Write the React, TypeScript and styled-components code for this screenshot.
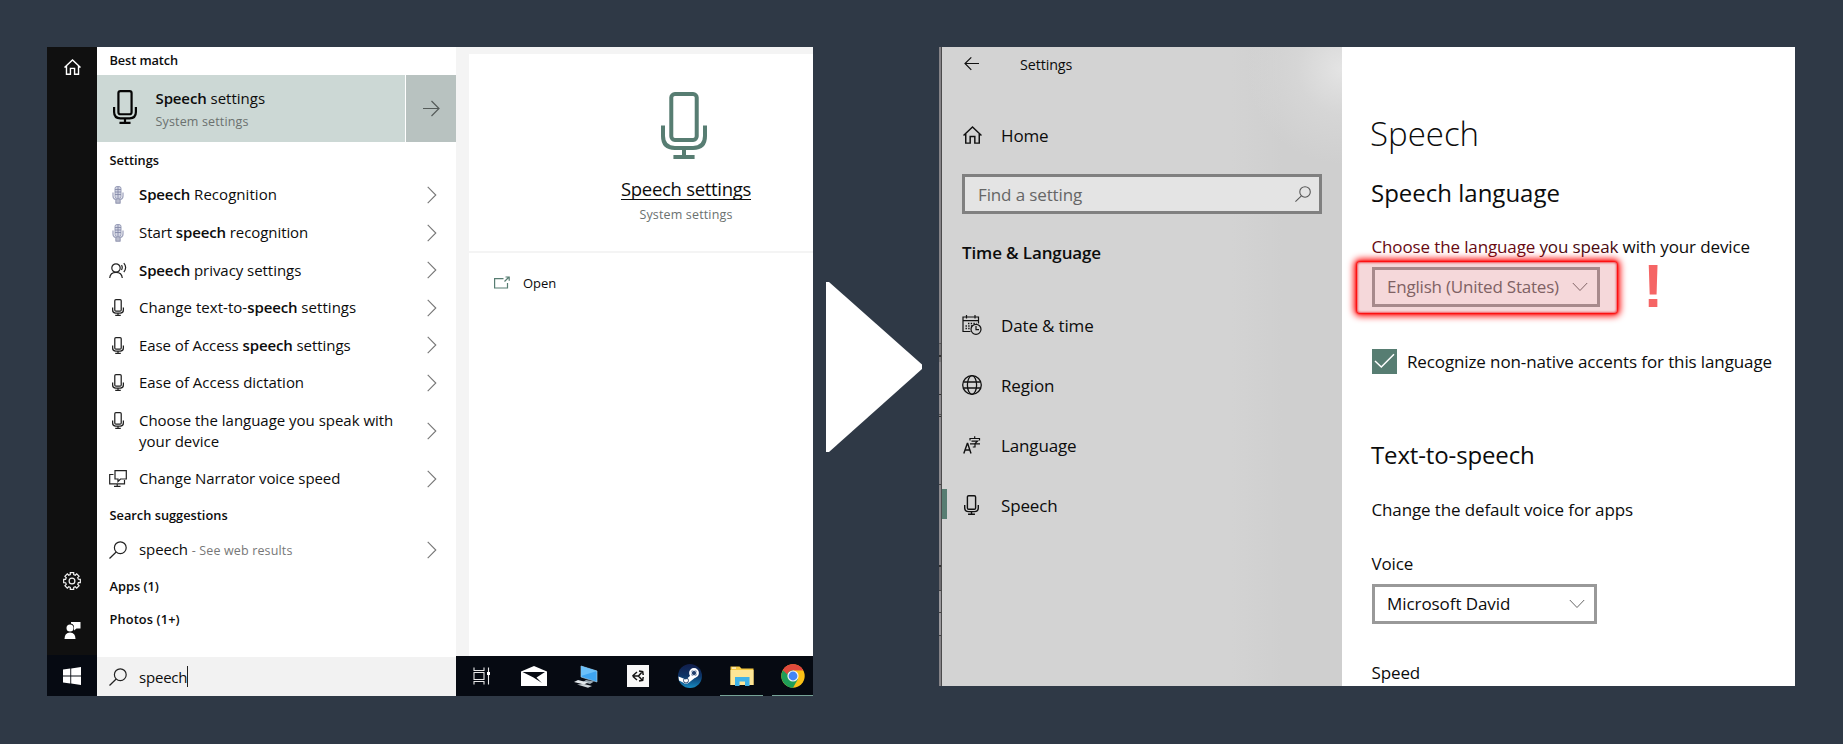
import React from 'react';
import styled, { createGlobalStyle, css } from 'styled-components';

const GlobalStyle = createGlobalStyle`
  * { box-sizing: border-box; }
  body { margin: 0; background: #2f3946; font-family: "Open Sans", "Noto Sans", sans-serif; color: #0c0c0c; }
  svg { display: block; flex: none; }
`;

const Page = styled.main`
  display: flex;
  align-items: flex-start;
  width: 1843px;
  height: 744px;
  padding: 47px;
  background: #2f3946;
  white-space: nowrap;
  overflow: hidden;
`;

/* ---------- Search window ---------- */

const SearchWindow = styled.section`
  display: grid;
  grid-template-columns: 50px 359px 357px;
  width: 766px;
  height: 649px;
  background: #fff;
  overflow: hidden;
`;

const Rail = styled.nav`
  display: flex;
  flex-direction: column;
  align-items: center;
  background: #101010;
`;

const RailIcon = styled.div<{ $h: number; $push?: boolean }>`
  display: flex;
  align-items: center;
  justify-content: center;
  width: 50px;
  height: ${p => p.$h}px;
  ${p => p.$push && css`margin-top: auto;`}
`;

const StartButton = styled(RailIcon)`
  background: #060a12;
`;

const Results = styled.div`
  display: flex;
  flex-direction: column;
`;

const GroupTitle = styled.h3<{ $h: number; $line?: number; $ls?: number }>`
  margin: 0;
  padding-left: 12.5px;
  height: ${p => p.$h}px;
  line-height: ${p => p.$line ?? p.$h}px;
  font-size: 12.8px;
  font-weight: 600;
  letter-spacing: ${p => p.$ls ?? 0}px;
`;

const BestMatch = styled.div`
  display: flex;
  gap: 1px;
  height: 67px;
`;

const BestMatchBody = styled.div`
  display: flex;
  width: 308px;
  padding: 15px 0 0 16px;
  background: #ccd8d5;
`;

const BestMatchText = styled.div`
  margin: -2.6px 0 0 18.5px;
`;

const BestMatchTitle = styled.div`
  font-size: 15px;
  line-height: 22px;
`;

const SmallGrey = styled.div`
  margin-top: 4px;
  font-size: 12.5px;
  line-height: 18px;
  letter-spacing: 0.15px;
  color: #6b716f;
`;

const BestMatchGo = styled.div`
  display: flex;
  align-items: center;
  justify-content: center;
  flex: 1;
  background: #b8c2c0;
`;

const ResultRow = styled.div<{ $tall?: boolean }>`
  display: flex;
  align-items: center;
  height: ${p => (p.$tall ? 58.1 : 37.6)}px;
  padding: 0 19px 0 12px;
`;

const ResultIcon = styled.div<{ $raise?: boolean }>`
  display: flex;
  justify-content: center;
  width: 18px;
  margin-right: 12px;
  ${p => p.$raise && css`margin-bottom: 21px;`}
`;

const ResultText = styled.div<{ $ls?: number }>`
  flex: 1;
  font-size: 15px;
  line-height: 21.2px;
  letter-spacing: ${p => p.$ls ?? 0}px;
`;

const Strong = styled.b`
  font-weight: 600;
  letter-spacing: -0.12px;
`;

const Hint = styled.span`
  font-size: 12.5px;
  letter-spacing: 0.14px;
  color: #777;
`;

const SearchInput = styled.div`
  display: flex;
  align-items: center;
  gap: 12px;
  height: 39px;
  margin-top: auto;
  padding-left: 12px;
  background: #f2f2f2;
`;

const Typed = styled.span`
  padding-top: 2px;
  border-right: 1px solid #222;
  font-size: 15px;
  line-height: 19px;
  letter-spacing: -0.2px;
`;

const Preview = styled.div`
  display: flex;
  flex-direction: column;
  gap: 2px;
  padding: 7px 0 0 13px;
  background: #f4f4f4;
  overflow: hidden;
`;

const PreviewCard = styled.div`
  display: flex;
  flex-direction: column;
  align-items: center;
  width: 434px;
  height: 197px;
  padding-top: 38px;
  background: #fff;
`;

const PreviewIcon = styled.div`
  margin-right: 4px;
`;

const PreviewTitle = styled.div`
  margin-top: 16.5px;
  font-size: 18.5px;
  line-height: 26px;
  letter-spacing: -0.3px;
  text-decoration: underline;
  text-decoration-thickness: 1px;
  text-decoration-skip-ink: none;
  text-underline-offset: 3px;
`;

const PreviewActions = styled.div`
  display: flex;
  flex: 1;
  align-items: flex-start;
  gap: 13px;
  padding: 20px 0 0 25px;
  background: #fff;
`;

const ActionIcon = styled.div`
  padding-top: 2.5px;
`;

const ActionLabel = styled.span`
  font-size: 13px;
  line-height: 20px;
`;

const Taskbar = styled.div`
  display: flex;
  height: 40px;
  margin: -2px 0 0 -13px;
  padding-left: 0.5px;
  background: #060a12;
`;

const TaskCell = styled.div<{ $open?: boolean }>`
  display: flex;
  flex: none;
  align-items: center;
  justify-content: center;
  width: 51.85px;
  height: 40px;
  background: ${p => (p.$open ? 'linear-gradient(#76a397, #76a397) 50% 100% / 43px 1px no-repeat' : 'none')};
`;

/* ---------- Arrow between windows ---------- */

const ArrowSlot = styled.div`
  margin: 235px 17px 0 13px;
`;

/* ---------- Settings window ---------- */

const SettingsWindow = styled.section`
  display: grid;
  grid-template-columns: 3px 400px 453px;
  width: 856px;
  height: 639px;
  background: #fff;
  overflow: hidden;
`;

const WindowEdge = styled.div`
  border-right: 1px solid #4b4b4c;
  background: linear-gradient(
    #858387 0 296px, #555 296px 297px, #777679 297px 308px, #333 308px 310px, #777679 310px 315px, #8b898d 315px 347px,
    #333 347px 348px, #8b898d 348px 367px, #555 367px 368px, #8b898d 368px 369px, #333 369px 370px, #8b898d 370px 437px, #444 437px 438px,
    #8b898d 438px 518px, #333 518px 520px, #6e6c70 520px 543px, #444 543px 544px, #9a989c 544px 565px, #444 565px 566px, #9a989c 566px 588px,
    #444 588px 589px, #858387 589px
  );
`;

const Side = styled.aside`
  display: flex;
  flex-direction: column;
  background:
    radial-gradient(circle at 400px 22px, rgba(230, 230, 230, 0.9), rgba(222, 222, 222, 0.45) 45px, rgba(215, 215, 215, 0) 95px),
    linear-gradient(90deg, #d3d3d3 0 290px, #cfcfcf 340px);
`;

const TitleBar = styled.div`
  display: flex;
  align-items: center;
  gap: 40px;
  height: 34px;
  padding-left: 22px;
  font-size: 14.3px;
  letter-spacing: -0.1px;
`;

const NavItem = styled.div<{ $h: number; $top?: number }>`
  display: flex;
  align-items: center;
  height: ${p => p.$h}px;
  margin-top: ${p => p.$top ?? 0}px;
  font-size: 17px;
  letter-spacing: -0.15px;
`;

const NavMarker = styled.i<{ $on?: boolean }>`
  width: 5px;
  height: 30px;
  margin: -2px 14px 0 0;
  background: ${p => (p.$on ? '#577d72' : 'transparent')};
`;

const NavIcon = styled.div<{ $narrow?: boolean }>`
  display: flex;
  justify-content: center;
  width: 22px;
  margin-right: 18px;
  padding-right: ${p => (p.$narrow ? 2 : 0)}px;
`;

const Find = styled.div`
  display: flex;
  align-items: center;
  justify-content: space-between;
  width: 360px;
  height: 40px;
  margin: 19px 0 0 20px;
  padding: 0 8px 0 13px;
  border: 3px solid #808080;
  background: #e4e4e4;
  font-size: 17px;
  letter-spacing: -0.13px;
  color: #666;
`;

const Section = styled.h2`
  height: 40px;
  margin: 19.4px 0 21.8px 20px;
  font-size: 17px;
  font-weight: 600;
  line-height: 40px;
  letter-spacing: -0.13px;
`;

const Content = styled.div`
  padding: 65px 0 0 30px;
`;

const H1 = styled.h1`
  margin: 0 0 0 -2px;
  font-size: 33px;
  font-weight: 300;
  line-height: 44px;
`;

const H2 = styled.h2<{ $top: number; $ls?: number }>`
  margin: ${p => p.$top}px 0 0 -1px;
  font-size: 24px;
  font-weight: 400;
  line-height: 32px;
  letter-spacing: ${p => p.$ls ?? 0}px;
`;

const Para = styled.p<{ $top: number }>`
  margin: ${p => p.$top}px 0 0 -0.5px;
  font-size: 17px;
  line-height: 24px;
  letter-spacing: -0.13px;
`;

const RedTint = styled.span<{ $deep?: boolean }>`
  color: ${p => (p.$deep ? '#4a0a10' : '#680a12')};
`;

const SelectRow = styled.div<{ $top: number }>`
  display: flex;
  height: 40px;
  margin-top: ${p => p.$top}px;
`;

const Select = styled.div<{ $w: number; $muted?: boolean; $ls: number }>`
  position: relative;
  display: flex;
  align-items: center;
  justify-content: space-between;
  width: ${p => p.$w}px;
  height: 40px;
  padding: 0 9px 0 12px;
  border: 3px solid #999;
  font-size: 17px;
  letter-spacing: ${p => p.$ls}px;
  color: ${p => (p.$muted ? '#636363' : '#0c0c0c')};
`;

const Glow = styled.div`
  position: absolute;
  left: -18px;
  top: -8px;
  width: 260px;
  height: 51px;
  border-radius: 3px;
  background: rgba(214, 96, 104, 0.245);
  box-shadow: 0 0 7px 3px #ff0000, 0 0 2px 1px #f00000, inset 0 0 2px 1px rgba(240, 20, 30, 0.65);
`;

const Bang = styled.span`
  width: 20px;
  margin-left: 43px;
  font: bold 61px/38px "Liberation Sans", Arial, sans-serif;
  text-align: center;
  color: #f56565;
`;

const CheckRow = styled.div`
  display: flex;
  align-items: center;
  gap: 10px;
  height: 25px;
  margin-top: 42px;
  font-size: 17px;
  letter-spacing: -0.12px;
`;

const CheckBox = styled.span`
  display: flex;
  align-items: center;
  justify-content: center;
  width: 25px;
  height: 25px;
  background: #577d72;
`;

/* ---------- Icons ---------- */

const Mic = ({ w, h, sw, color = '#111' }: { w: number; h: number; sw: number; color?: string }) => {
  const i = sw / 2;
  const cx = w / 2;
  const bw = w * 0.64 - sw;
  const by = h * 0.865;
  const r = w * 0.26;
  return (
    <svg width={w} height={h} viewBox={`0 0 ${w} ${h}`} fill="none" stroke={color} strokeWidth={sw}>
      <rect x={cx - bw / 2} y={i} width={bw} height={h * 0.745 - sw} rx={sw * 0.9} />
      <path d={`M${i} ${h * 0.5}V${by - i - r}Q${i} ${by - i} ${i + r} ${by - i}H${w - i - r}Q${w - i} ${by - i} ${w - i} ${by - i - r}V${h * 0.5}`} />
      <path d={`M${cx} ${by - i}V${h - i}M${w * 0.27} ${h - i}H${w * 0.73}`} />
    </svg>
  );
};

const ClassicMic = () => (
  <svg width="12" height="18" viewBox="0 0 12 18">
    <rect x="3" y="0.5" width="6" height="12" rx="2" fill="#d3d6e4" stroke="#9a9fb9" />
    <path d="M3 3.500H9M3 6H9M3 8.500H9M6 1V12" stroke="#868ba8" strokeWidth="0.9" />
    <path d="M1 6.500V10Q1 13 4 13.500V17H8V13.500Q11 13 11 10V6.500" fill="none" stroke="#a3a7bf" strokeWidth="1.300" />
    <path d="M4 13.500H8V17H4Z" fill="#b9bccd" stroke="#8d92ac" strokeWidth="0.6" />
  </svg>
);

const PersonVoice = () => (
  <svg width="18" height="17" viewBox="0 0 18 17" fill="none" stroke="#222" strokeWidth="1.200">
    <circle cx="7" cy="6" r="4.200" />
    <path d="M0.700 16C1 12.500 3.500 10.300 7 10.300S13 12.500 13.300 16" />
    <path d="M12.500 3.200Q14 5.500 12.500 8M14.800 1.200Q18.500 5.500 14.800 10" />
  </svg>
);

const Narrator = () => (
  <svg width="18" height="17" viewBox="0 0 18 17" fill="none" stroke="#222" strokeWidth="1.200">
    <path d="M4.500 4.500H0.700V13.800H15.500V10" />
    <path d="M6 0.700H17.300V9H11.500L9 11.500V9H6Z" />
    <path d="M8.200 14V16.300M5 16.300H11.500" />
  </svg>
);

const Magnifier = ({ size, color }: { size: number; color: string }) => (
  <svg width={size} height={size} viewBox="0 0 18 18" fill="none" stroke={color} strokeWidth="1.200">
    <circle cx="11.300" cy="6.700" r="5.900" />
    <path d="M7.200 11L0.500 17.500" />
  </svg>
);

const House = ({ w, h, color, sw = 1.4 }: { w: number; h: number; color: string; sw?: number }) => (
  <svg width={w} height={h} viewBox="0 0 18 17" fill="none" stroke={color} strokeWidth={sw}>
    <path d="M0.500 9L9 1L17.500 9M2.600 7.500V16.200H6.800V10H11.200V16.200H15.400V7.500" />
  </svg>
);

const gearPath = (() => {
  const pts: string[] = [];
  const radii = [8.5, 8.5, 6.6, 6.6];
  const offs = [-0.2, 0.2, 0.26, 0.52];
  for (let i = 0; i < 8; i++) {
    radii.forEach((r, k) => {
      const a = (i * Math.PI) / 4 + offs[k];
      pts.push(`${(9 + r * Math.cos(a)).toFixed(2)} ${(9 + r * Math.sin(a)).toFixed(2)}`);
    });
  }
  return `M${pts.join('L')}Z`;
})();

const Gear = () => (
  <svg width="18" height="18" viewBox="0 0 18 18" fill="none" stroke="#f2f2f2" strokeWidth="1.200">
    <path d={gearPath} />
    <circle cx="9" cy="9" r="2.900" />
  </svg>
);

const Feedback = () => (
  <svg width="17" height="17" viewBox="0 0 17 17" fill="#fff">
    <path d="M7 0H16.500V6.500H12.500L10 8.500V4Q9 1.800 7 1.500Z" />
    <circle cx="6" cy="6" r="3.500" />
    <path d="M0.500 17Q0.500 10.500 6 10.500T11.500 17Z" />
  </svg>
);

const WindowsLogo = () => (
  <svg width="18" height="18" viewBox="0 0 18 18" fill="#fff">
    <path d="M0 2.500L7.300 1.500V8.600H0ZM8.200 1.400L18 0V8.600H8.200ZM0 9.500H7.300V16.500L0 15.500ZM8.200 9.500H18V18L8.200 16.600Z" />
  </svg>
);

const Chevron = () => (
  <svg width="10" height="18" viewBox="0 0 10 18" fill="none" stroke="#777" strokeWidth="1.100">
    <path d="M0.700 0.900L8.800 9L0.700 17.100" />
  </svg>
);

const DownChevron = () => (
  <svg width="16" height="10" viewBox="0 0 16 10" fill="none" stroke="#666" strokeWidth="1">
    <path d="M0.800 1L8 8.500L15.200 1" />
  </svg>
);

const ArrowRight = () => (
  <svg width="17" height="17" viewBox="0 0 17 17" fill="none" stroke="#555b59" strokeWidth="1.200">
    <path d="M0 8.500H16M8.500 1L16 8.500L8.500 16" />
  </svg>
);

const ArrowLeft = () => (
  <svg width="16" height="14" viewBox="0 0 16 14" fill="none" stroke="#111" strokeWidth="1.200">
    <path d="M15 6.500H1M7.300 0.400L1 6.500L7.300 12.800" />
  </svg>
);

const OpenIcon = () => (
  <svg width="16" height="13" viewBox="0 0 16 13" fill="none" stroke="#577d72" strokeWidth="1.200">
    <path d="M9.500 2.600H0.600V12H13.500V7" />
    <path d="M10.500 5.500L14.500 1.500M11.500 1H15.200V4.700" />
  </svg>
);

const CalendarClock = () => (
  <svg width="20" height="20" viewBox="0 0 20 20" fill="none" stroke="#111" strokeWidth="1.200">
    <path d="M8.500 16.500H1V2H16.500V8.500M1 5.600H16.500M4.500 0V3.600M13 0V3.600" />
    <path d="M6 8.500H14.500M3.500 11H10M3.500 13.500H8.500" strokeDasharray="1.400 1.300" strokeWidth="1.400" />
    <circle cx="14" cy="14.300" r="5" />
    <path d="M14 11V14.600H17" />
  </svg>
);

const Globe = () => (
  <svg width="20" height="20" viewBox="0 0 20 20" fill="none" stroke="#111" strokeWidth="1.300">
    <circle cx="10" cy="10" r="9.300" />
    <ellipse cx="10" cy="10" rx="4.600" ry="9.300" />
    <path d="M1.300 7H18.700M1.300 13H18.700" />
  </svg>
);

const LanguageIcon = () => (
  <svg width="18" height="18" viewBox="0 0 18 18" fill="none" stroke="#111" strokeWidth="1.400">
    <path d="M0.800 17.500L4.300 7.500H4.700L8 17.500M2 14H7" />
    <path d="M7 4.500V2.500H16.500V4.500M11.700 0.200V2.500M8.500 5.200H14.500L12 7.500V11H9.800M7 7.800H17" strokeWidth="1.200" />
  </svg>
);

const Check = () => (
  <svg width="21" height="16" viewBox="0 0 21 16" fill="none" stroke="#fff" strokeWidth="1.500">
    <path d="M1 8L7.300 14L20 1.200" />
  </svg>
);

const TaskView = () => (
  <svg width="18" height="18" viewBox="0 0 18 18" fill="none" stroke="#e8e8e8" strokeWidth="1.100">
    <path d="M1 0.500V3.500H11V0.500M1 17.500V14.500H11V17.500M1 5.500H11V12.500H1ZM15.500 0.500V17.500" />
    <path d="M14 5H17V8H14Z" fill="#fff" stroke="none" />
  </svg>
);

const MailIcon = () => (
  <svg width="26" height="20" viewBox="0 0 26 20">
    <path d="M0 5.500L13 0L26 5.500V20H0Z" fill="#fff" />
    <path d="M1.500 6H24L15.500 11.500L21 17L12.500 11.500Z" fill="#060a12" />
  </svg>
);

const RemotePc = () => (
  <svg width="24" height="23" viewBox="0 0 24 23">
    <path d="M7 1L23 6V17L7 12Z" fill="#3ea5f2" stroke="#b8d8ea" strokeWidth="0.600" />
    <path d="M7 1L23 6L7 11Z" fill="#6cc1fa" />
    <path d="M12 15L20 16.500L16 19L9 17Z" fill="#9eacb5" />
    <path d="M4 15L14 17.500L10 19.500L0 17Z" fill="#e3e8eb" />
    <path d="M3 19.500L10 19L18 21L14 22.800Z" fill="#cdd4d8" />
  </svg>
);

const UnityIcon = () => (
  <svg width="22" height="22" viewBox="0 0 22 22">
    <rect width="22" height="22" fill="#f7f7f7" />
    <path d="M5.500 11L10 7M5.500 11L10 15M5.500 11H11.500M12 6L15.700 6.700L16.200 10M12 16L15.700 15.300L16.200 12M11.500 11L15 7M11.500 11L15 15" fill="none" stroke="#111" strokeWidth="1.500" />
  </svg>
);

const SteamIcon = () => (
  <svg width="24" height="24" viewBox="0 0 24 24">
    <defs>
      <linearGradient id="steam" x1="0" y1="0" x2="0" y2="1">
        <stop offset="0" stopColor="#111d4a" />
        <stop offset="0.500" stopColor="#0d3467" />
        <stop offset="1" stopColor="#168bc2" />
      </linearGradient>
    </defs>
    <circle cx="12" cy="12" r="12" fill="url(#steam)" />
    <path d="M0.500 12.500L8 15.500L13 11L18 13L11 18.500Q8 21 5 18.500L1 16.500Z" fill="#fff" />
    <circle cx="16" cy="9" r="4" fill="#22406e" stroke="#fff" strokeWidth="1.800" />
    <circle cx="16" cy="9" r="2.600" fill="none" stroke="#dfe6ee" strokeWidth="1" />
    <circle cx="8" cy="16.500" r="2.500" fill="none" stroke="#1a3a68" strokeWidth="0.900" />
  </svg>
);

const FolderIcon = () => (
  <svg width="24" height="20" viewBox="0 0 24 20">
    <path d="M0.500 0.500H9.500L11.500 2.500H23.500V19H0.500Z" fill="#f5c944" />
    <path d="M0.500 4H23.500V19H0.500Z" fill="#fde596" />
    <path d="M2 1.500H6V2.600H2Z" fill="#fff" />
    <path d="M5 11H19.500V20H15V15.500H9.500V20H5Z" fill="#3fb2e8" />
  </svg>
);

const ChromeIcon = () => (
  <svg width="24" height="24" viewBox="0 0 24 24">
    <circle cx="12" cy="12" r="11.700" fill="#fbc116" />
    <path d="M12 12L1.870 6.150A11.700 11.700 0 0 1 22.130 6.150H12Z" fill="#df4a3c" />
    <path d="M12 12L1.870 6.150A11.700 11.700 0 0 0 12 23.700L17 14.900Z" fill="#1f9e58" />
    <path d="M1.870 6.150L7 15L12 12V6.150Z" fill="#1f9e58" />
    <path d="M1.870 6.150A11.700 11.700 0 0 1 22.130 6.150H12Q7.500 6.300 6.400 10.500Z" fill="#df4a3c" />
    <circle cx="12" cy="12" r="5.600" fill="#f3f3f3" />
    <circle cx="12" cy="12" r="4.400" fill="#4285f4" />
  </svg>
);

const SmallMic = () => <Mic w={12} h={17} sw={1.25} color="#222" />;

const results: { icon: React.ReactNode; text: React.ReactNode; tall?: boolean; ls?: number }[] = [
  { icon: <ClassicMic />, text: <><Strong>Speech</Strong> Recognition</>, ls: 0.05 },
  { icon: <ClassicMic />, text: <>Start <Strong>speech</Strong> recognition</>, ls: -0.08 },
  { icon: <PersonVoice />, text: <><Strong>Speech</Strong> privacy settings</>, ls: -0.05 },
  { icon: <SmallMic />, text: <>Change text-to-<Strong>speech</Strong> settings</>, ls: 0.04 },
  { icon: <SmallMic />, text: <>Ease of Access <Strong>speech</Strong> settings</>, ls: -0.07 },
  { icon: <SmallMic />, text: 'Ease of Access dictation', ls: -0.03 },
  { icon: <SmallMic />, text: <>Choose the language you speak with<br />your device</>, tall: true, ls: -0.02 },
  { icon: <Narrator />, text: 'Change Narrator voice speed', ls: -0.08 },
];

const pages = [
  { icon: <CalendarClock />, name: 'Date & time' },
  { icon: <Globe />, name: 'Region' },
  { icon: <LanguageIcon />, name: 'Language' },
  { icon: <Mic w={15} h={20} sw={1.4} />, name: 'Speech' },
];

export default function App() {
  return (
    <>
      <GlobalStyle />
      <Page>
        <SearchWindow>
          <Rail>
            <RailIcon $h={40}><House w={17} h={16} color="#fff" sw={1.5} /></RailIcon>
            <RailIcon $h={50} $push><Gear /></RailIcon>
            <RailIcon $h={49}><Feedback /></RailIcon>
            <StartButton $h={41}><WindowsLogo /></StartButton>
          </Rail>

          <Results>
            <GroupTitle $h={28} $line={26} $ls={-0.1}>Best match</GroupTitle>
            <BestMatch>
              <BestMatchBody>
                <Mic w={24} h={34} sw={2.2} color="#050505" />
                <BestMatchText>
                  <BestMatchTitle><Strong>Speech</Strong> settings</BestMatchTitle>
                  <SmallGrey>System settings</SmallGrey>
                </BestMatchText>
              </BestMatchBody>
              <BestMatchGo><ArrowRight /></BestMatchGo>
            </BestMatch>
            <GroupTitle $h={34.2} $line={36}>Settings</GroupTitle>
            {results.map((r, i) => (
              <ResultRow key={i} $tall={r.tall}>
                <ResultIcon $raise={r.tall}>{r.icon}</ResultIcon>
                <ResultText $ls={r.ls}>{r.text}</ResultText>
                <Chevron />
              </ResultRow>
            ))}
            <GroupTitle $h={33.9} $line={36}>Search suggestions</GroupTitle>
            <ResultRow>
              <ResultIcon><Magnifier size={18} color="#222" /></ResultIcon>
              <ResultText $ls={-0.1}>speech <Hint>- See web results</Hint></ResultText>
              <Chevron />
            </ResultRow>
            <GroupTitle $h={35.4}>Apps (1)</GroupTitle>
            <GroupTitle $h={30.6} $ls={0.12}>Photos (1+)</GroupTitle>
            <SearchInput>
              <Magnifier size={18} color="#222" />
              <Typed>speech</Typed>
            </SearchInput>
          </Results>

          <Preview>
            <PreviewCard>
              <PreviewIcon><Mic w={46} h={67} sw={4} color="#577d72" /></PreviewIcon>
              <PreviewTitle>Speech settings</PreviewTitle>
              <SmallGrey>System settings</SmallGrey>
            </PreviewCard>
            <PreviewActions>
              <ActionIcon><OpenIcon /></ActionIcon>
              <ActionLabel>Open</ActionLabel>
            </PreviewActions>
            <Taskbar>
              <TaskCell><TaskView /></TaskCell>
              <TaskCell><MailIcon /></TaskCell>
              <TaskCell><RemotePc /></TaskCell>
              <TaskCell><UnityIcon /></TaskCell>
              <TaskCell><SteamIcon /></TaskCell>
              <TaskCell $open><FolderIcon /></TaskCell>
              <TaskCell $open><ChromeIcon /></TaskCell>
            </Taskbar>
          </Preview>
        </SearchWindow>

        <ArrowSlot>
          <svg width="96" height="170" viewBox="0 0 96 170">
            <path d="M0 0H3L96 82.500V87L3 170H0Z" fill="#fff" />
          </svg>
        </ArrowSlot>

        <SettingsWindow>
          <WindowEdge />
          <Side>
            <TitleBar><ArrowLeft />Settings</TitleBar>
            <NavItem $h={40} $top={34}>
              <NavMarker />
              <NavIcon><House w={19} h={18} color="#111" /></NavIcon>
              Home
            </NavItem>
            <Find>Find a setting<Magnifier size={16} color="#555" /></Find>
            <Section>Time &amp; Language</Section>
            {pages.map(p => (
              <NavItem key={p.name} $h={60}>
                <NavMarker $on={p.name === 'Speech'} />
                <NavIcon $narrow={p.name === 'Speech'}>{p.icon}</NavIcon>
                {p.name}
              </NavItem>
            ))}
          </Side>
          <Content>
            <H1>Speech</H1>
            <H2 $top={21.4}>Speech language</H2>
            <Para $top={26}>
              <RedTint>Choose the language</RedTint> <RedTint $deep>you speak</RedTint> with your device
            </Para>
            <SelectRow $top={7.6}>
              <Select $w={228} $ls={-0.21} $muted>
                English (United States)
                <DownChevron />
                <Glow />
              </Select>
              <Bang>!</Bang>
            </SelectRow>
            <CheckRow>
              <CheckBox><Check /></CheckBox>
              Recognize non-native accents for this language
            </CheckRow>
            <H2 $top={65.4} $ls={-0.14}>Text-to-speech</H2>
            <Para $top={27}>Change the default voice for apps</Para>
            <Para $top={29.6}>Voice</Para>
            <SelectRow $top={8}>
              <Select $w={225} $ls={-0.07}>
                Microsoft David
                <DownChevron />
              </Select>
            </SelectRow>
            <Para $top={37.4}>Speed</Para>
          </Content>
        </SettingsWindow>
      </Page>
    </>
  );
}
